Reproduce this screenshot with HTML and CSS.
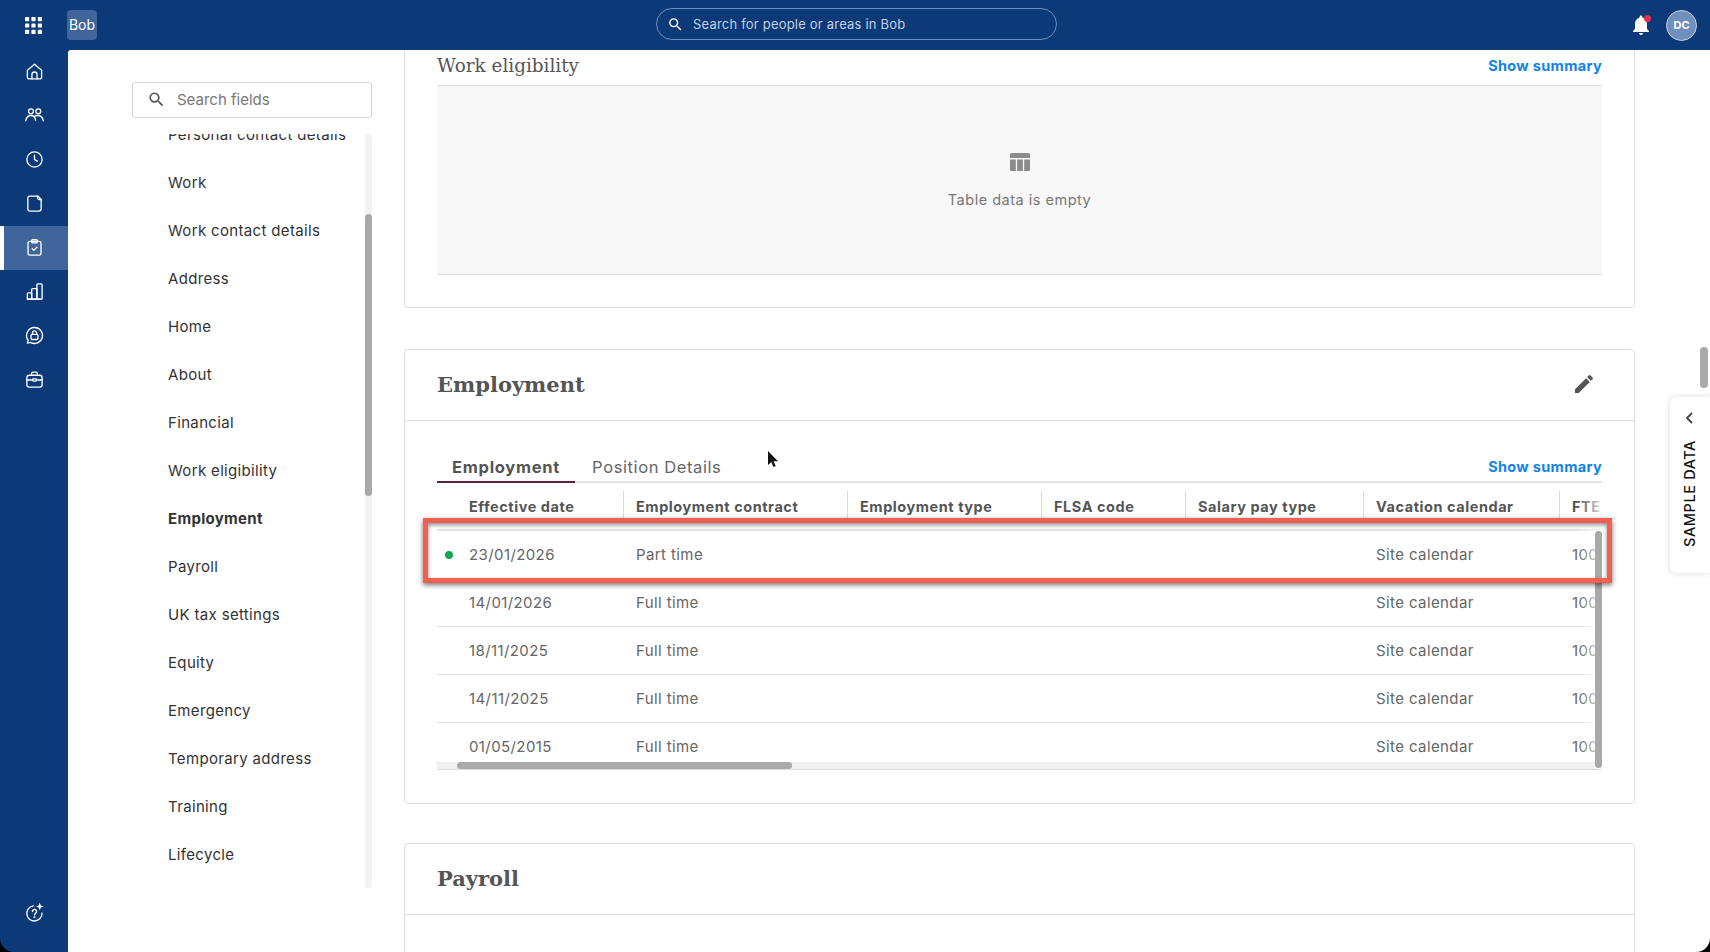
FILE: index.html
```html
<!DOCTYPE html>
<html lang="en">
<head>
    <meta charset="UTF-8">
    <meta name="viewport" content="width=device-width, initial-scale=1.0">
    <title>Bob</title>
    <link rel="stylesheet" href="styles.css">
</head>
<body>
    <div class="app">
        <header class="topbar">
            <div class="apps-icon">
                <svg width="17" height="17" viewBox="0 0 17 17" fill="#fff">
                    <rect x="0" y="0" width="4.2" height="4.2" rx=".6"/><rect x="6.4" y="0" width="4.2" height="4.2" rx=".6"/><rect x="12.8" y="0" width="4.2" height="4.2" rx=".6"/>
                    <rect x="0" y="6.4" width="4.2" height="4.2" rx=".6"/><rect x="6.4" y="6.4" width="4.2" height="4.2" rx=".6"/><rect x="12.8" y="6.4" width="4.2" height="4.2" rx=".6"/>
                    <rect x="0" y="12.8" width="4.2" height="4.2" rx=".6"/><rect x="6.4" y="12.8" width="4.2" height="4.2" rx=".6"/><rect x="12.8" y="12.8" width="4.2" height="4.2" rx=".6"/>
                </svg>
            </div>
            <div class="brand">Bob</div>
            <div class="global-search">
                <svg width="17" height="17" viewBox="0 0 24 24" fill="#fff"><path d="M15.5 14h-.79l-.28-.27A6.47 6.47 0 0 0 16 9.5 6.5 6.5 0 1 0 9.5 16c1.61 0 3.09-.59 4.23-1.57l.27.28v.79l5 4.99L20.49 19l-4.99-5zm-6 0C7.01 14 5 11.99 5 9.5S7.01 5 9.5 5 14 7.01 14 9.5 11.99 14 9.5 14z"/></svg>
                <span>Search for people or areas in Bob</span>
            </div>
            <div class="top-actions">
                <div class="bell">
                    <svg width="24" height="24" viewBox="0 0 24 24" fill="#fff"><path d="M12 22c1.1 0 2-.9 2-2h-4c0 1.1.9 2 2 2zm6-6v-5c0-3.07-1.63-5.64-4.5-6.32V4c0-.83-.67-1.5-1.5-1.5s-1.5.67-1.5 1.5v.68C7.64 5.36 6 7.92 6 11v5l-2 2v1h16v-1l-2-2z"/></svg>
                    <span class="bell-dot"></span>
                </div>
                <div class="avatar">DC</div>
            </div>
        </header>

        <div class="workspace">
            <nav class="rail">
                <a class="rail-item">
                    <svg class="rail-icon" viewBox="0 0 20 20"><path d="M2.5 8.6 10 2.3l7.5 6.3v7.2a2 2 0 0 1-2 2h-11a2 2 0 0 1-2-2z"/><path d="M7.3 17.8v-4.6a2.7 2.7 0 0 1 5.4 0v4.6"/></svg>
                </a>
                <a class="rail-item">
                    <svg class="rail-icon" viewBox="0 0 20 20"><circle cx="6.3" cy="5.6" r="2.6"/><circle cx="14" cy="5.6" r="2.6"/><path d="M.8 15.5c.6-3.6 2.8-5.5 5.4-5.5s4.4 1.7 5 5.2"/><path d="M9.6 11.2c1.100-.8 2.600-1.300 4.100-1.200 2.800.1 4.900 2 5.500 5.500"/></svg>
                </a>
                <a class="rail-item">
                    <svg class="rail-icon" viewBox="0 0 20 20"><circle cx="10" cy="10" r="8"/><path d="M10 5.500V10l3 1.700"/></svg>
                </a>
                <a class="rail-item">
                    <svg class="rail-icon" viewBox="0 0 20 20"><path d="M5 2.200h8.500L17 5.700V15.500a2.500 2.500 0 0 1-2.500 2.500h-9A2.500 2.500 0 0 1 3 15.500V4.200a2 2 0 0 1 2-2z"/><path d="M13.200 2.200v2a1.600 1.600 0 0 0 1.600 1.600H17"/></svg>
                </a>
                <a class="rail-item active">
                    <svg class="rail-icon" viewBox="0 0 20 20"><rect x="3.200" y="3.600" width="13.600" height="14.400" rx="2"/><rect x="7" y="1.800" width="6" height="3.400" rx="1"/><path d="m7.500 11.200 1.800 1.800 3.300-3.200"/></svg>
                </a>
                <a class="rail-item">
                    <svg class="rail-icon" viewBox="0 0 20 20"><path d="M2.500 18v-5.500a1 1 0 0 1 1-1H7V18z"/><path d="M7 18V8a1 1 0 0 1 1-1h4.500v11z"/><path d="M12.500 18V3a1 1 0 0 1 1-1H17a1 1 0 0 1 1 1v14a1 1 0 0 1-1 1z"/><path d="M2.500 18h15"/></svg>
                </a>
                <a class="rail-item">
                    <svg class="rail-icon" viewBox="0 0 20 20"><path d="M10 1.600a8.400 8.400 0 1 1-4.300 15.600l-3.300.9.900-3.100A8.400 8.400 0 0 1 10 1.600z"/><rect x="6.300" y="8.800" width="7.400" height="5.400" rx="1.200"/><path d="M7.800 8.800V7.300a2.200 2.200 0 0 1 4.400 0v1.500"/></svg>
                </a>
                <a class="rail-item">
                    <svg class="rail-icon" viewBox="0 0 20 20"><rect x="2" y="5.500" width="16" height="12.500" rx="2.500"/><path d="M7 5.500V3.800a1.500 1.500 0 0 1 1.500-1.500h3A1.500 1.500 0 0 1 13 3.800v1.700"/><path d="M2 10.500h6M12 10.500h6"/><rect x="8" y="9.300" width="4" height="2.400" rx=".8"/></svg>
                </a>
                <a class="rail-item rail-help">
                    <svg class="rail-icon" viewBox="0 0 20 20"><path d="M17.900 10.800A8 8 0 1 1 8.800 3"/><path d="M7.800 9a2.200 2.200 0 1 1 3.300 1.900c-.8.500-1.100 1-1.100 1.700"/><circle cx="10" cy="15" r=".4"/><path class="spark" d="m15.500-.5 1.100 3 3 1.100-3 1.100-1.100 3-1.100-3-3-1.100 3-1.100z"/></svg>
                </a>
            </nav>

            <main class="main">
                <aside class="field-nav">
                    <div class="field-search">
                        <svg width="19" height="19" viewBox="0 0 24 24" fill="#555"><path d="M15.500 14h-.79l-.28-.27A6.470 6.470 0 0 0 16 9.500 6.500 6.500 0 1 0 9.500 16c1.610 0 3.090-.59 4.230-1.570l.27.28v.79l5 4.990L20.490 19l-4.990-5zm-6 0C7.010 14 5 11.990 5 9.500S7.010 5 9.500 5 14 7.010 14 9.500 11.990 14 9.500 14z"/></svg>
                        <span>Search fields</span>
                    </div>
                    <div class="field-list">
                        <ul>
                            <li>Personal contact details</li>
                            <li>Work</li>
                            <li>Work contact details</li>
                            <li>Address</li>
                            <li>Home</li>
                            <li>About</li>
                            <li>Financial</li>
                            <li>Work eligibility</li>
                            <li class="current">Employment</li>
                            <li>Payroll</li>
                            <li>UK tax settings</li>
                            <li>Equity</li>
                            <li>Emergency</li>
                            <li>Temporary address</li>
                            <li>Training</li>
                            <li>Lifecycle</li>
                        </ul>
                        <div class="field-thumb"></div>
                    </div>
                </aside>

                <section class="content">
                    <div class="card card-cut">
                        <div class="sub-head">
                            <h3>Work eligibility</h3>
                            <a class="summary-link">Show summary</a>
                        </div>
                        <div class="empty-table">
                            <svg width="20" height="18" viewBox="0 0 20 18" fill="#8c8c8c"><path d="M1.500 0h17A1.500 1.500 0 0 1 20 1.500V5H0V1.500A1.500 1.500 0 0 1 1.500 0z"/><path d="M0 6.500h5.800V18H1.500A1.500 1.500 0 0 1 0 16.500z"/><rect x="7.100" y="6.500" width="5.800" height="11.500"/><path d="M14.200 6.500H20v10a1.500 1.500 0 0 1-1.500 1.500h-4.300z"/></svg>
                            <p>Table data is empty</p>
                        </div>
                    </div>

                    <div class="card">
                        <div class="card-head">
                            <h2>Employment</h2>
                            <svg class="edit-icon" width="24" height="24" viewBox="0 0 24 24" fill="#555"><path d="M3 17.250V21h3.750L17.810 9.940l-3.750-3.750L3 17.250zM20.710 7.040a1 1 0 0 0 0-1.410l-2.340-2.340a1 1 0 0 0-1.410 0l-1.830 1.830 3.750 3.750 1.830-1.830z"/></svg>
                        </div>
                        <div class="card-body">
                            <div class="tabs">
                                <a class="tab tab-active">Employment</a>
                                <a class="tab">Position Details</a>
                                <a class="summary-link tabs-link">Show summary</a>
                            </div>
                            <div class="table-box">
                                <div class="table-clip">
                                    <table class="history">
                                        <colgroup>
                                            <col class="c-date"><col class="c-contract"><col class="c-type"><col class="c-flsa"><col class="c-pay"><col class="c-cal"><col class="c-fte">
                                        </colgroup>
                                        <thead>
                                            <tr>
                                                <th>Effective date</th>
                                                <th>Employment contract</th>
                                                <th>Employment type</th>
                                                <th>FLSA code</th>
                                                <th>Salary pay type</th>
                                                <th>Vacation calendar</th>
                                                <th>FTE</th>
                                            </tr>
                                        </thead>
                                        <tbody>
                                            <tr>
                                                <td><span class="dot"></span>23/01/2026</td>
                                                <td>Part time</td><td></td><td></td><td></td>
                                                <td>Site calendar</td><td>100</td>
                                            </tr>
                                            <tr>
                                                <td>14/01/2026</td>
                                                <td>Full time</td><td></td><td></td><td></td>
                                                <td>Site calendar</td><td>100</td>
                                            </tr>
                                            <tr>
                                                <td>18/11/2025</td>
                                                <td>Full time</td><td></td><td></td><td></td>
                                                <td>Site calendar</td><td>100</td>
                                            </tr>
                                            <tr>
                                                <td>14/11/2025</td>
                                                <td>Full time</td><td></td><td></td><td></td>
                                                <td>Site calendar</td><td>100</td>
                                            </tr>
                                            <tr>
                                                <td>01/05/2015</td>
                                                <td>Full time</td><td></td><td></td><td></td>
                                                <td>Site calendar</td><td>100</td>
                                            </tr>
                                        </tbody>
                                    </table>
                                </div>
                                <div class="fade"></div>
                                <div class="v-bar"></div>
                                <div class="h-bar"><div class="h-thumb"></div></div>
                                <div class="highlight"></div>
                            </div>
                        </div>
                    </div>

                    <div class="card card-last">
                        <div class="card-head">
                            <h2>Payroll</h2>
                        </div>
                    </div>
                </section>

                <div class="page-thumb"></div>
                <div class="sample-tab">
                    <svg width="10" height="14" viewBox="0 0 10 14" fill="none" stroke="#444" stroke-width="1.800"><path d="M8 2 3 7l5 5"/></svg>
                    <span>SAMPLE DATA</span>
                </div>
                <svg class="cursor" width="12" height="18" viewBox="0 0 12 18"><path d="M1 0v14l3.300-3 2.200 5 2.200-1-2.200-4.800H11z" fill="#111"/></svg>
            </main>
        </div>
    </div>
</body>
</html>
```

FILE: styles.css
```css
* {
    box-sizing: border-box;
}

html, body {
    margin: 0;
    height: 100%;
    background-color: #000;
    overflow: hidden;
}

body {
    font-family: Inter, "Open Sans", sans-serif;
    color: #333;
}

.app {
    height: 952px;
    display: flex;
    flex-direction: column;
    background-color: #0c3978;
    border-radius: 0 0 14px 14px;
    overflow: hidden;
}

/* top bar */
.topbar {
    height: 50px;
    flex: none;
    display: flex;
    align-items: center;
    position: relative;
}

.apps-icon {
    width: 17px;
    height: 17px;
    margin-left: 25px;
    display: flex;
}

.brand {
    width: 30px;
    height: 30px;
    margin-left: 25px;
    padding-bottom: 2px;
    border-radius: 4px;
    background-color: #40659b;
    color: #fff;
    font-size: 14px;
    display: flex;
    align-items: center;
    justify-content: center;
}

.global-search {
    width: 401px;
    height: 32px;
    margin-left: 559px;
    margin-bottom: 2px;
    padding-left: 10px;
    display: flex;
    align-items: center;
    gap: 9px;
    border: 1px solid #6c8bb8;
    border-radius: 16px;
    color: #c3d0e4;
    font-size: 13px;
    letter-spacing: .2px;
}

.top-actions {
    margin-left: auto;
    margin-right: 13px;
    display: flex;
    align-items: center;
    gap: 13px;
}

.bell {
    position: relative;
    width: 24px;
    height: 24px;
}

.bell-dot {
    position: absolute;
    top: 2px;
    right: 2px;
    width: 7px;
    height: 7px;
    border-radius: 50%;
    background-color: #e0314f;
}

.avatar {
    width: 31px;
    height: 31px;
    border-radius: 50%;
    border: 1px solid #c5d2e6;
    background-color: #6f8fbd;
    color: #fff;
    font-size: 11px;
    font-weight: 700;
    display: flex;
    align-items: center;
    justify-content: center;
}

.workspace {
    flex: 1;
    display: flex;
    min-height: 0;
}

/* left rail */
.rail {
    width: 68px;
    flex: none;
    display: flex;
    flex-direction: column;
}

.rail-item {
    height: 44px;
    flex: none;
    padding-bottom: 2px;
    display: flex;
    align-items: center;
    justify-content: center;
}

.rail-item.active {
    background-color: #40659b;
    border-left: 4px solid #fff;
    padding-right: 4px;
}

.rail-help {
    margin-top: auto;
    margin-bottom: 17px;
}

.rail-icon {
    width: 19px;
    height: 19px;
    overflow: visible;
    fill: none;
    stroke: #fff;
    stroke-width: 1.400;
    stroke-linecap: round;
    stroke-linejoin: round;
}

.rail-icon .spark {
    fill: #fff;
    stroke: none;
}

/* white page */
.main {
    flex: 1;
    position: relative;
    display: flex;
    min-width: 0;
    background-color: #fff;
    border-top-left-radius: 3px;
}

.field-nav {
    width: 336px;
    flex: none;
    padding: 32px 0 0 64px;
}

.field-search {
    width: 240px;
    height: 36px;
    padding: 0 0 1px 14px;
    display: flex;
    align-items: center;
    gap: 11px;
    border: 1px solid #d4d4d4;
    border-radius: 3px;
    color: #777;
    font-size: 15px;
}

.field-list {
    position: relative;
    width: 240px;
    height: 754px;
    margin-top: 16px;
    overflow: hidden;
    background: linear-gradient(to left, #f2f2f2 7px, #fff 7px);
    border-radius: 0 4px 4px 0;
}

.field-list ul {
    list-style: none;
    margin: -24px 0 0;
    padding: 0 0 0 36px;
}

.field-list li {
    height: 48px;
    display: flex;
    align-items: center;
    font-size: 15px;
    letter-spacing: .34px;
    color: #333;
}

.field-list li.current {
    font-weight: 700;
    letter-spacing: .3px;
}

.field-thumb {
    position: absolute;
    right: 0;
    top: 80px;
    width: 7px;
    height: 282px;
    border-radius: 4px;
    background-color: #a9a9a9;
}

/* cards */
.content {
    flex: 1;
    min-width: 0;
    padding-right: 75px;
    overflow: hidden;
}

.card {
    border: 1px solid #dfdfdf;
    border-radius: 4px;
    margin-bottom: 39px;
}

.card-cut {
    border-top: 0;
    border-radius: 0 0 4px 4px;
    padding: 0 32px 32px;
    margin-bottom: 41px;
}

.card-last {
    height: 200px;
    margin-bottom: 0;
}

.sub-head {
    height: 35px;
    display: flex;
    align-items: center;
    justify-content: space-between;
    padding-bottom: 4px;
}

.sub-head h3 {
    margin: 0;
    font-family: "DejaVu Serif", serif;
    font-size: 18.400px;
    font-weight: 400;
    color: #555;
}

.summary-link {
    color: #1283e4;
    font-size: 14.500px;
    font-weight: 700;
    letter-spacing: .33px;
}

.empty-table {
    height: 190px;
    padding-top: 67px;
    display: flex;
    flex-direction: column;
    align-items: center;
    background-color: #f8f8f8;
    border-top: 1px solid #dcdcdc;
    border-bottom: 1px solid #dcdcdc;
}

.empty-table p {
    margin: 20px 0 0;
    color: #777;
    font-size: 14.500px;
    letter-spacing: .5px;
}

.card-head {
    height: 71px;
    padding: 0 32px 2px;
    display: flex;
    align-items: center;
    justify-content: space-between;
    border-bottom: 1px solid #dfdfdf;
}

.card-head h2 {
    margin: 0;
    font-family: "DejaVu Serif", serif;
    font-size: 21px;
    font-weight: 700;
    color: #555;
}

.edit-icon {
    margin-right: 6px;
}

.card-body {
    padding: 32px 32px 33px;
}

.tabs {
    height: 30px;
    display: flex;
    align-items: flex-start;
    border-bottom: 2px solid #e4e4e4;
}

.tab {
    height: 30px;
    padding: 4px 15px 0;
    font-size: 16.500px;
    letter-spacing: .6px;
    color: #666;
}

.tab-active {
    font-weight: 700;
    letter-spacing: .72px;
    color: #555;
    border-bottom: 2px solid #5b2340;
    margin-right: 2px;
}

.tabs-link {
    margin-left: auto;
    padding-top: 5px;
}

.table-box {
    position: relative;
    height: 287px;
    border-bottom: 1px solid #dcdcdc;
}

.table-clip {
    height: 279px;
    overflow: hidden;
}

.history {
    width: 1300px;
    table-layout: fixed;
    border-collapse: collapse;
}

.c-date { width: 186px; }
.c-contract { width: 224px; }
.c-type { width: 194px; }
.c-flsa { width: 144px; }
.c-pay { width: 178px; }
.c-cal { width: 196px; }
.c-fte { width: 178px; }

.history th {
    position: relative;
    height: 47px;
    padding: 0 0 0 13px;
    text-align: left;
    font-size: 14.500px;
    font-weight: 700;
    letter-spacing: .55px;
    color: #555;
    border-bottom: 2px solid #e4e4e4;
}

.history th + th::before {
    content: "";
    position: absolute;
    left: 0;
    top: 8px;
    height: 30px;
    width: 1px;
    background-color: #dcdcdc;
}

.history td {
    height: 48px;
    padding: 0 0 0 13px;
    font-size: 15px;
    letter-spacing: .4px;
    color: #666;
    border-bottom: 1px solid #e2e2e2;
}

.history th:first-child,
.history td:first-child {
    position: relative;
    padding-left: 32px;
}

.dot {
    position: absolute;
    left: 8px;
    top: 20px;
    width: 8px;
    height: 8px;
    border-radius: 50%;
    background-color: #18a558;
}

.fade {
    position: absolute;
    right: 0;
    top: 0;
    width: 24px;
    height: 279px;
    background: linear-gradient(to right, rgba(255, 255, 255, 0), rgba(255, 255, 255, .85));
}

.v-bar {
    position: absolute;
    right: 0;
    top: 48px;
    width: 7px;
    height: 237px;
    border-radius: 4px;
    background-color: #a9a9a9;
}

.h-bar {
    position: absolute;
    left: 0;
    right: 7px;
    top: 279px;
    height: 7px;
    background-color: #f1f1f1;
}

.h-thumb {
    width: 335px;
    height: 7px;
    margin-left: 20px;
    border-radius: 4px;
    background-color: #a9a9a9;
}

.highlight {
    position: absolute;
    left: -14px;
    right: -10px;
    top: 35px;
    height: 65px;
    border: 5px solid #f55f52;
    box-shadow: 0 2px 5px rgba(0, 0, 0, .55), inset 0 2px 4px rgba(0, 0, 0, .45);
}

/* things over the page */
.page-thumb {
    position: absolute;
    right: 2px;
    top: 297px;
    width: 8px;
    height: 41px;
    border-radius: 4px;
    background-color: #a9a9a9;
}

.sample-tab {
    position: absolute;
    right: 0;
    top: 347px;
    width: 40px;
    height: 176px;
    padding: 14px 2px 0 0;
    display: flex;
    flex-direction: column;
    align-items: center;
    gap: 15px;
    background-color: #fff;
    border-radius: 6px 0 0 6px;
    box-shadow: 0 0 6px rgba(0, 0, 0, .16);
}

.sample-tab span {
    writing-mode: vertical-rl;
    transform: rotate(180deg);
    font-size: 14.500px;
    font-weight: 500;
    letter-spacing: .6px;
    color: #111;
    white-space: nowrap;
}

.cursor {
    position: absolute;
    left: 699px;
    top: 401px;
}
```
